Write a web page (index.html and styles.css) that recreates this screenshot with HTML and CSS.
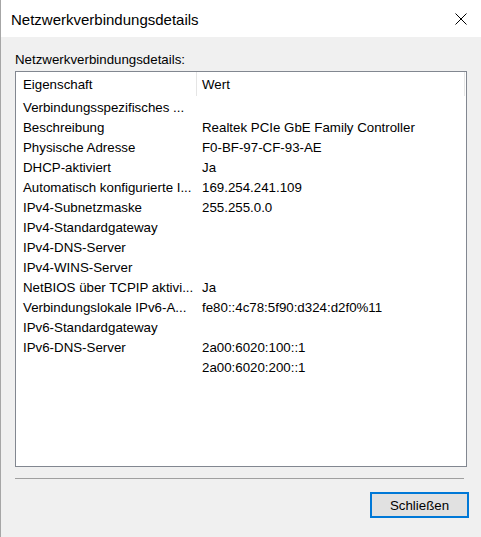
FILE: index.html
```html
<!DOCTYPE html>
<html lang="de">
<head>
    <meta charset="UTF-8">
    <title>Netzwerkverbindungsdetails</title>
    <link rel="stylesheet" href="styles.css">
</head>
<body>
    <div class="window">
        <div class="titlebar">
            <span class="title">Netzwerkverbindungsdetails</span>
            <svg class="close" width="12" height="12" viewBox="0 0 12 12">
                <path d="M0.5 0.5 L11.5 11.5 M11.5 0.5 L0.5 11.5" stroke="#000" stroke-width="1" fill="none"/>
            </svg>
        </div>
        <div class="content">
            <div class="label">Netzwerkverbindungsdetails:</div>
            <div class="listview">
                <div class="lv-header">
                    <div class="hcell first">Eigenschaft</div>
                    <div class="hcell second">Wert</div>
                </div>
                <div class="lv-row"><span class="c1">Verbindungsspezifisches ...</span><span class="c2"></span></div>
                <div class="lv-row"><span class="c1">Beschreibung</span><span class="c2">Realtek PCIe GbE Family Controller</span></div>
                <div class="lv-row"><span class="c1">Physische Adresse</span><span class="c2">F0-BF-97-CF-93-AE</span></div>
                <div class="lv-row"><span class="c1">DHCP-aktiviert</span><span class="c2">Ja</span></div>
                <div class="lv-row"><span class="c1">Automatisch konfigurierte I...</span><span class="c2">169.254.241.109</span></div>
                <div class="lv-row"><span class="c1">IPv4-Subnetzmaske</span><span class="c2">255.255.0.0</span></div>
                <div class="lv-row"><span class="c1">IPv4-Standardgateway</span><span class="c2"></span></div>
                <div class="lv-row"><span class="c1">IPv4-DNS-Server</span><span class="c2"></span></div>
                <div class="lv-row"><span class="c1">IPv4-WINS-Server</span><span class="c2"></span></div>
                <div class="lv-row"><span class="c1">NetBIOS über TCPIP aktivi...</span><span class="c2">Ja</span></div>
                <div class="lv-row"><span class="c1">Verbindungslokale IPv6-A...</span><span class="c2">fe80::4c78:5f90:d324:d2f0%11</span></div>
                <div class="lv-row"><span class="c1">IPv6-Standardgateway</span><span class="c2"></span></div>
                <div class="lv-row"><span class="c1">IPv6-DNS-Server</span><span class="c2">2a00:6020:100::1</span></div>
                <div class="lv-row"><span class="c1"></span><span class="c2">2a00:6020:200::1</span></div>
            </div>
            <div class="separator"></div>
            <div class="buttons">
                <button class="button">Schließen</button>
            </div>
        </div>
    </div>
</body>
</html>
```

FILE: styles.css
```css
html, body {
    margin: 0;
    padding: 0;
}
body {
    width: 481px;
    height: 537px;
    overflow: hidden;
    font-family: 'Liberation Sans', Arial, sans-serif;
    font-size: 13.3px;
    color: #000;
    background: #f0f0f0;
}
.window {
    height: 537px;
    border-left: 1px solid #a6a6a6;
    display: flex;
    flex-direction: column;
}
.titlebar {
    height: 37px;
    background: #fff;
    display: flex;
    align-items: center;
    justify-content: space-between;
    padding: 0 14px 0 10px;
    flex-shrink: 0;
}
.title {
    font-size: 15px;
    margin-top: 1px;
}
.close {
    display: block;
}
.content {
    flex: 1;
    background: #f0f0f0;
    padding: 14px 12px 0 14px;
}
.label {
    line-height: 16px;
    height: 16px;
    margin-top: 1px;
}
.listview {
    margin-top: 3px;
    width: 452px;
    height: 396px;
    box-sizing: border-box;
    border: 1px solid #828790;
    background: #fff;
}
.lv-header {
    display: flex;
    height: 26px;
}
.hcell {
    box-sizing: border-box;
    line-height: 26px;
    height: 24px;
    border-right: 1px solid #e5e5e5;
}
.hcell.first {
    width: 181px;
    padding-left: 7px;
}
.hcell.second {
    width: 268px;
    padding-left: 5px;
}
.lv-row {
    display: flex;
    height: 20px;
    line-height: 20px;
    white-space: nowrap;
}
.c1 {
    width: 180px;
    padding-left: 7px;
    box-sizing: border-box;
    overflow: hidden;
}
.c2 {
    padding-left: 6px;
}
.separator {
    margin-top: 11px;
    width: 449px;
    height: 1px;
    background: #a0a0a0;
}
.buttons {
    display: flex;
    justify-content: flex-end;
    margin-top: 13px;
}
.button {
    width: 99px;
    height: 26px;
    box-sizing: border-box;
    border: 2px solid #0078d7;
    background: #e1e1e1;
    font-family: 'Liberation Sans', Arial, sans-serif;
    font-size: 13.3px;
    color: #000;
    padding: 0;
}
```
